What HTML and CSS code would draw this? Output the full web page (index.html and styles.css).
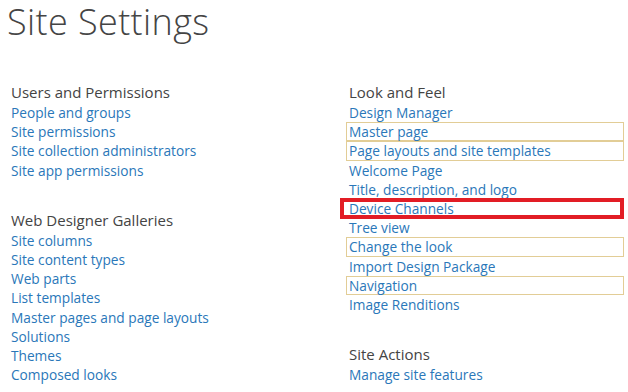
FILE: index.html
```html
<!DOCTYPE html>
<html>
  <head>
    <meta charset="utf-8">
    <title>Site Settings</title>
    <link rel="stylesheet" href="styles.css">
  </head>
  <body>
    <h1 class="page-title">Site Settings</h1>
    <div class="settings">
      <div class="col">
        <div class="group">
          <h3>Users and Permissions</h3>
          <ul>
            <li><a href="#">People and groups</a></li>
            <li><a href="#">Site permissions</a></li>
            <li><a href="#">Site collection administrators</a></li>
            <li><a href="#">Site app permissions</a></li>
          </ul>
        </div>
        <div class="group">
          <h3>Web Designer Galleries</h3>
          <ul>
            <li><a href="#">Site columns</a></li>
            <li><a href="#">Site content types</a></li>
            <li><a href="#">Web parts</a></li>
            <li><a href="#">List templates</a></li>
            <li><a href="#">Master pages and page layouts</a></li>
            <li><a href="#">Solutions</a></li>
            <li><a href="#">Themes</a></li>
            <li><a href="#">Composed looks</a></li>
          </ul>
        </div>
      </div>
      <div class="col">
        <div class="group">
          <h3>Look and Feel</h3>
          <ul>
            <li><a href="#">Design Manager</a></li>
            <li class="marked"><a href="#">Master page</a></li>
            <li class="marked"><a href="#">Page layouts and site templates</a></li>
            <li><a href="#">Welcome Page</a></li>
            <li><a href="#">Title, description, and logo</a></li>
            <li class="flagged"><a href="#">Device Channels</a></li>
            <li><a href="#">Tree view</a></li>
            <li class="marked"><a href="#">Change the look</a></li>
            <li><a href="#">Import Design Package</a></li>
            <li class="marked"><a href="#">Navigation</a></li>
            <li><a href="#">Image Renditions</a></li>
          </ul>
        </div>
        <div class="group">
          <h3>Site Actions</h3>
          <ul>
            <li><a href="#">Manage site features</a></li>
          </ul>
        </div>
      </div>
    </div>
  </body>
</html>
```

FILE: styles.css
```css
/* site settings */
body {
  margin: 0;
  padding: 0 4px 0 11px;
  background: #fff;
  font-family: "Open Sans", "Noto Sans", sans-serif;
}
.page-title {
  margin: 0 0 0 -4px;
  padding-top: 2px;
  font-size: 36px;
  font-weight: 300;
  line-height: 40px;
  letter-spacing: 0.4px;
  color: #444;
}
.settings {
  display: grid;
  grid-template-columns: 338px 1fr;
  margin-top: 40px;
}
.group + .group {
  margin-top: 30px;
}
.group h3 {
  margin: 0 0 1px;
  font-size: 15px;
  font-weight: 400;
  line-height: 20px;
  color: #444;
}
.group ul {
  margin: 0;
  padding: 0;
  list-style: none;
}
.group li {
  height: 19.2px;
  line-height: 19.2px;
  font-size: 13.7px;
}
.group a {
  color: #2a77b9;
  text-decoration: none;
}
.group li.marked {
  margin-left: -3px;
  padding-left: 2px;
  border: 1px solid #e2cd96;
  height: 17.2px;
  line-height: 17.2px;
}
.group li.flagged {
  position: relative;
}
.group li.flagged::after {
  content: "";
  position: absolute;
  left: -9px;
  right: 0;
  top: -1px;
  bottom: -1px;
  border: 4px solid #e21d25;
}
```
